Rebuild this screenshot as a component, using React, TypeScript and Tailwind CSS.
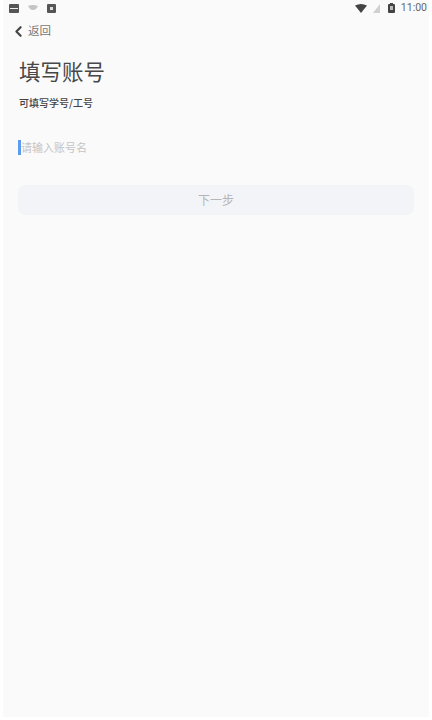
import { ChevronLeft } from "lucide-react";

const font = "font-['Noto_Sans_CJK_SC','Noto_Sans',sans-serif]";

function StatusBar() {
    return (
        <div className="flex h-[14px] items-center justify-between pl-[6px] pr-[2px] pt-[2px]">
            <div className="flex items-center gap-[9px]">
                <svg width="10" height="9" viewBox="0 0 10 9">
                    <rect width="10" height="9" rx="1" fill="#555" />
                    <rect x="1" y="4" width="8" height="1" fill="#eee" />
                </svg>
                <svg width="10" height="6" viewBox="0 0 10 6">
                    <path d="M0 1 Q5 -1 10 1 L8 4 Q5 6 2 4 Z" fill="#c4c4c4" />
                </svg>
                <svg width="9" height="9" viewBox="0 0 9 9">
                    <rect width="9" height="9" rx="1" fill="#555" />
                    <rect x="3" y="3" width="3" height="3" fill="#ddd" />
                </svg>
            </div>
            <div className="flex items-center">
                <svg width="12" height="9" viewBox="0 0 12 9">
                    <path d="M0 1.5 Q6 -1.5 12 1.5 L6 9 Z" fill="#444" />
                </svg>
                <svg className="ml-[6px]" width="7" height="9" viewBox="0 0 7 9">
                    <path d="M0 9 L7 0 V9 Z" fill="#d0d0d0" />
                </svg>
                <svg className="ml-[8px]" width="7" height="10" viewBox="0 0 7 10">
                    <rect y="1" width="7" height="9" rx="1" fill="#444" />
                    <rect x="2" width="3" height="1" fill="#444" />
                    <rect x="2" y="3" width="3" height="4" fill="#bbb" />
                </svg>
                <span className="ml-[6px] text-[10.5px] leading-none text-[#666] font-['Roboto',sans-serif]">11:00</span>
            </div>
        </div>
    );
}

export default function App() {
    return (
        <div className={`h-[720px] w-[432px] bg-white pl-[3px] pr-[3px] ${font}`}>
            <div className="h-[717px] bg-[#fafafa]">
                <StatusBar />
                {/* back */}
                <div className="mt-[7px] flex h-[20px] items-center pl-[7px]">
                    <ChevronLeft size={17} strokeWidth={3} className="text-[#444]" />
                    <span className="ml-[1px] text-[11.5px] text-[#777]">返回</span>
                </div>
                <div className="pl-[15px] pr-[15px]">
                    <h1 className="mt-[15px] pl-[1px] text-[21.5px] font-normal leading-[30px] text-[#484848]">填写账号</h1>
                    <p className="mt-[10px] pl-[1px] text-[10px] font-medium leading-[14px] text-[#444]">可填写学号/工号</p>
                    {/* input */}
                    <div className="mt-[29px] flex h-[16px] items-center">
                        <div className="h-[15px] w-[3px] bg-[#5b9cf0]" />
                        <span className="text-[11px] text-[#c4c4c6]">请输入账号名</span>
                    </div>
                    <button className="mt-[30px] flex h-[30px] w-full items-center justify-center rounded-[7px] bg-[#f3f4f7] text-[12px] text-[#b4b5b8]">
                        下一步
                    </button>
                </div>
            </div>
        </div>
    );
}
